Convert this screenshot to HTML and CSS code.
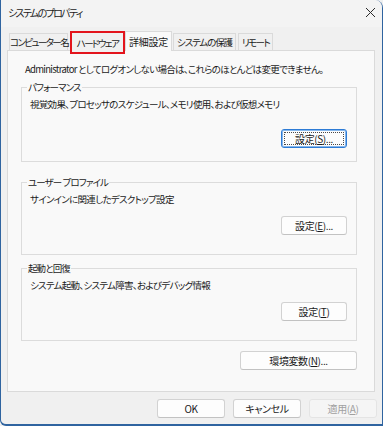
FILE: index.html
```html
<!DOCTYPE html>
<html lang="ja">
<head>
    <meta charset="UTF-8">
    <title>システムのプロパティ</title>
    <link rel="stylesheet" href="styles.css">
</head>
<body>
    <div class="window">
        <div class="titlebar">
            <span class="title">システムのプロパティ</span>
            <svg class="close" width="11" height="11" viewBox="0 0 11 11">
                <path d="M1 1 L10 10 M10 1 L1 10" stroke="#2b2b2b" stroke-width="1" fill="none"/>
            </svg>
        </div>
        <div class="tabs">
            <div class="tab tab-1">コンピューター名</div>
            <div class="tab tab-2 tab-marked">ハードウェア</div>
            <div class="tab tab-3 tab-active">詳細設定</div>
            <div class="tab tab-4">システムの保護</div>
            <div class="tab tab-5">リモート</div>
        </div>
        <div class="panel">
            <p class="note">Administrator としてログオンしない場合は、これらのほとんどは変更できません。</p>

            <fieldset class="group group-perf">
                <legend>パフォーマンス</legend>
                <p class="desc">視覚効果、プロセッサのスケジュール、メモリ使用、および仮想メモリ</p>
                <div class="row row-perf"><button class="btn btn-default"><span class="focus">設定(<u>S</u>)...</span></button></div>
            </fieldset>

            <fieldset class="group group-profile">
                <legend>ユーザー プロファイル</legend>
                <p class="desc">サインインに関連したデスクトップ設定</p>
                <div class="row"><button class="btn">設定(<u>E</u>)...</button></div>
            </fieldset>

            <fieldset class="group group-boot">
                <legend>起動と回復</legend>
                <p class="desc">システム起動、システム障害、およびデバッグ情報</p>
                <div class="row"><button class="btn">設定(<u>T</u>)</button></div>
            </fieldset>

            <div class="env-row">
                <button class="btn btn-env">環境変数(<u>N</u>)...</button>
            </div>
        </div>
        <div class="footer">
            <button class="btn btn-ok">OK</button>
            <button class="btn btn-cancel">キャンセル</button>
            <button class="btn btn-apply" disabled>適用(<u>A</u>)</button>
        </div>
    </div>
</body>
</html>
```

FILE: styles.css
```css
html, body {
    margin: 0;
    padding: 0;
    background: #f0f0f0;
}

body {
    font-family: "Noto Sans CJK JP", "Noto Sans", sans-serif;
    font-size: 9.5px;
    font-feature-settings: "palt";
    letter-spacing: -0.7px;
    color: #1b1b1b;
}

.window {
    width: 383px;
    height: 426px;
    box-sizing: border-box;
    border-left: 1px solid #2f64a0;
    border-right: 1px solid #2f64a0;
    border-bottom: 2px solid #2f64a0;
    border-radius: 0 8px 0 6px;
    background: #f0f0f0;
    overflow: hidden;
}

.titlebar {
    height: 27px;
    box-sizing: border-box;
    display: flex;
    align-items: center;
    justify-content: space-between;
    padding: 0 6px 3px 7px;
    background: #f3f3f3;
}

.title {
    font-size: 10px;
    letter-spacing: -1.7px;
}

/* tabs */
.tabs {
    display: flex;
    align-items: flex-end;
    height: 24px;
    padding-left: 8px;
}

.tab {
    box-sizing: border-box;
    height: 18px;
    line-height: 16px;
    text-align: center;
    background: #f0f0f0;
    border: 1px solid #dadada;
    border-bottom: none;
    white-space: nowrap;
    letter-spacing: -1.6px;
}

.tab-1 { width: 59px; margin-right: 4px; }
.tab-2 { width: 51px; margin-right: 2px; }
.tab-3 { width: 47px; margin-right: 1px; }
.tab-4 { width: 63px; margin-right: 2px; letter-spacing: -1.1px; }
.tab-5 { width: 35px; }

.tab-active {
    height: 20px;
    line-height: 19px;
    font-size: 10px;
    background: #f9f9f9;
    position: relative;
    z-index: 2;
    letter-spacing: -0.2px;
}

.tab-marked {
    outline: 2px solid #e3141c;
    border-color: transparent;
    position: relative;
    z-index: 3;
    height: 19px;
    margin-bottom: -1px;
    line-height: 18px;
}

/* property page */
.panel {
    margin: -1px 7px 0 6px;
    height: 342px;
    box-sizing: border-box;
    background: #f9f9f9;
    border: 1px solid #dadada;
    padding: 11px 17px 0 13px;
    position: relative;
    z-index: 1;
}

.note {
    margin: 0 0 0 4px;
    line-height: 14px;
    white-space: nowrap;
}

.group {
    margin: 0;
    padding: 0 9px 0 7px;
    border: 1px solid #dcdcdc;
    min-width: 0;
}

.group legend {
    padding: 0 1px;
    margin-left: -2px;
    line-height: 14px;
    letter-spacing: -0.9px;
}

.group-perf {
    margin-top: 4px;
    height: 80px;
}

.group-profile {
    margin-top: 13px;
    height: 78px;
}

.group-boot {
    margin-top: 6px;
    height: 78px;
}

.desc {
    margin: 3px 0 0 1px;
    line-height: 14px;
    white-space: nowrap;
}

.row {
    display: flex;
    justify-content: flex-end;
    margin-top: 10px;
}

.row-perf {
    margin-top: 18px;
}

/* buttons */
.btn {
    font-family: inherit;
    font-size: 10px;
    font-feature-settings: "palt";
    letter-spacing: -0.4px;
    color: #1b1b1b;
    background: #fdfdfd;
    border: 1px solid #d2d2d2;
    border-bottom-color: #c2c2c2;
    border-radius: 3px;
    box-sizing: border-box;
    height: 19px;
    width: 66px;
    padding: 0;
    line-height: 16px;
}

.btn u {
    text-decoration-thickness: 1px;
    text-underline-offset: 1px;
}

.btn-default {
    border: 1px solid #2d7bd5;
    box-shadow: inset 0 0 0 1px #86b7ec;
    padding: 2px;
}

.btn-default .focus {
    display: block;
    height: 100%;
    box-sizing: border-box;
    border: 1px dotted #4a4a4a;
    line-height: 12px;
}

.env-row {
    display: flex;
    justify-content: flex-end;
    margin-top: 10px;
}

.btn-env {
    width: 117px;
}

.footer {
    display: flex;
    justify-content: flex-end;
    padding: 7px 5px 0 0;
}

.btn-ok,
.btn-cancel,
.btn-apply {
    width: 68px;
}

.btn-ok,
.btn-cancel {
    margin-right: 8px;
}

.btn-apply:disabled {
    color: #a0a0a0;
    background: #f5f5f5;
    border-color: #e4e4e4;
}
```
